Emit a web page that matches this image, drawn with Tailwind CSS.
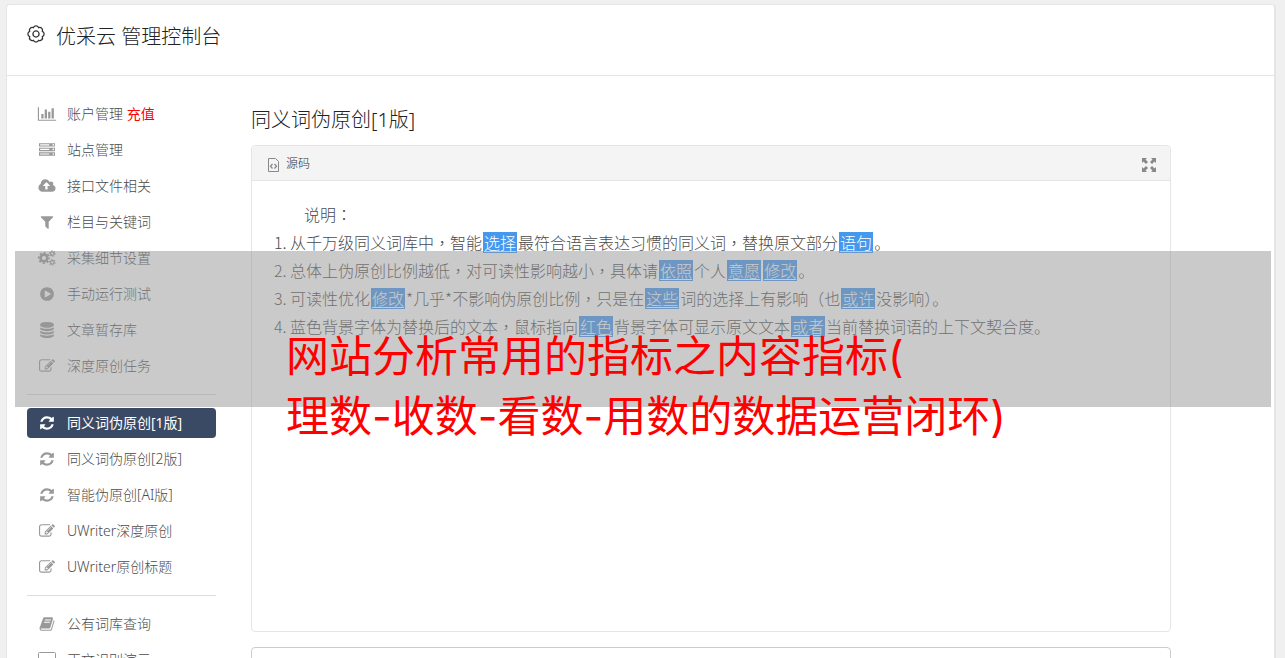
<!DOCTYPE html>
<html lang="zh-CN">
  <head>
    <meta charset="UTF-8" />
    <meta name="viewport" content="width=device-width, initial-scale=1.0" />
    <title>优采云 管理控制台</title>
    <script src="https://cdn.jsdelivr.net/npm/@tailwindcss/browser@4"></script>
  </head>
  <body
    class="relative h-screen overflow-hidden bg-[#f0f0f0] pt-1 pl-1.5 pr-[9px] font-['Noto_Sans','Noto_Sans_CJK_SC',sans-serif] font-light text-[#4b4b4b]"
  >
    <!-- Icon shapes shared by the menu -->
    <svg class="hidden">
      <symbol id="i-chart" viewBox="0 0 2048 1792">
        <path d="M640 896v512h-256v-512h256zm384-512v1024h-256v-1024h256zm1024 1152v128h-2048v-1536h128v1408h1920zm-640-896v768h-256v-768h256zm384-384v1152h-256v-1152h256z" />
      </symbol>
      <symbol id="i-server" viewBox="0 0 1792 1792">
        <path d="M128 1408h1024v-128h-1024v128zm0-512h1024v-128h-1024v128zm1568 448q0-40-28-68t-68-28-68 28-28 68 28 68 68 28 68-28 28-68zm-1568-960h1024v-128h-1024v128zm1568 448q0-40-28-68t-68-28-68 28-28 68 28 68 68 28 68-28 28-68zm0-512q0-40-28-68t-68-28-68 28-28 68 28 68 68 28 68-28 28-68zm96 832v384h-1792v-384h1792zm0-512v384h-1792v-384h1792zm0-512v384h-1792v-384h1792z" />
      </symbol>
      <symbol id="i-cloud" viewBox="0 0 1920 1792">
        <path d="M1280 864q0-14-9-23l-352-352q-9-9-23-9t-23 9l-351 351q-10 12-10 24 0 14 9 23t23 9h224v352q0 13 9.5 22.5t22.5 9.5h192q13 0 22.5-9.5t9.5-22.5v-352h224q13 0 22.5-9.5t9.5-22.5zm640 288q0 159-112.5 271.5t-271.5 112.5h-1088q-185 0-316.5-131.5t-131.5-316.5q0-130 70-240t188-165q-2-30-2-43 0-212 150-362t362-150q156 0 285.5 87t188.5 231q71-62 166-62 106 0 181 75t75 181q0 76-41 138 130 31 213.5 135.5t83.5 238.5z" />
      </symbol>
      <symbol id="i-filter" viewBox="0 0 1792 1792">
        <path d="M1595 295q17 41-14 70l-493 493v742q0 42-39 59-13 5-25 5-27 0-45-19l-256-256q-19-19-19-45v-486l-493-493q-31-29-14-70 17-39 59-39h1280q42 0 59 39z" />
      </symbol>
      <symbol id="i-cogs" viewBox="0 0 18 16">
        <g fill="none" stroke="currentColor">
          <circle cx="6" cy="8" r="3.4" stroke-width="2.6" />
          <circle cx="6" cy="8" r="5.2" stroke-width="1.8" stroke-dasharray="2.1 1.984" stroke-dashoffset="1" />
          <circle cx="14.3" cy="3.6" r="1.8" stroke-width="1.3" />
          <circle cx="14.3" cy="3.6" r="2.8" stroke-width="1.1" stroke-dasharray="1.3 1.632" />
          <circle cx="14.3" cy="12.4" r="1.8" stroke-width="1.3" />
          <circle cx="14.3" cy="12.4" r="2.8" stroke-width="1.1" stroke-dasharray="1.3 1.632" />
        </g>
      </symbol>
      <symbol id="i-play" viewBox="0 0 1792 1792">
        <path d="M896 128q209 0 385.5 103t279.5 279.5 103 385.5-103 385.5-279.5 279.5-385.5 103-385.5-103-279.5-279.5-103-385.5 103-385.5 279.5-279.5 385.5-103zm384 823q32-18 32-55t-32-55l-544-320q-31-19-64-1-32 19-32 56v640q0 37 32 56 16 8 32 8 17 0 32-9z" />
      </symbol>
      <symbol id="i-database" viewBox="0 0 1792 1792">
        <path d="M896 768q237 0 443-43t325-127v170q0 69-103 128t-280 93.5-385 34.5-385-34.5-280-93.5-103-128v-170q119 84 325 127t443 43zm0 768q237 0 443-43t325-127v170q0 69-103 128t-280 93.5-385 34.5-385-34.5-280-93.5-103-128v-170q119 84 325 127t443 43zm0-384q237 0 443-43t325-127v170q0 69-103 128t-280 93.5-385 34.5-385-34.5-280-93.5-103-128v-170q119 84 325 127t443 43zm0-1152q208 0 385 34.5t280 93.5 103 128v128q0 69-103 128t-280 93.5-385 34.5-385-34.5-280-93.5-103-128v-128q0-69 103-128t280-93.5 385-34.5z" />
      </symbol>
      <symbol id="i-edit" viewBox="0 0 1792 1792">
        <path d="M888 1184l116-116-152-152-116 116v56h96v96h56zm440-720q-16-16-33 1l-350 350q-17 17-1 33t33-1l350-350q17-17 1-33zm80 594v190q0 119-84.5 203.5t-203.5 84.5h-832q-119 0-203.5-84.5t-84.5-203.5v-832q0-119 84.5-203.5t203.5-84.5h832q63 0 117 25 15 7 18 23 3 17-9 29l-49 49q-14 14-32 8-23-6-45-6h-832q-66 0-113 47t-47 113v832q0 66 47 113t113 47h832q66 0 113-47t47-113v-126q0-13 9-22l64-64q15-15 35-7t20 29zm-96-738l288 288-672 672h-288v-288zm444 132l-92 92-288-288 92-92q28-28 68-28t68 28l152 152q28 28 28 68t-28 68z" />
      </symbol>
      <symbol id="i-refresh" viewBox="0 0 1792 1792">
        <path d="M1639 1056q0 5-1 7-64 268-268 434.5t-478 166.5q-146 0-282.5-55t-243.5-157l-129 129q-19 19-45 19t-45-19-19-45v-448q0-26 19-45t45-19h448q26 0 45 19t19 45-19 45l-137 137q71 66 161 102t187 36q134 0 250-65t186-179q11-17 53-117 8-23 30-23h192q13 0 22.5 9.5t9.5 22.5zm25-800v448q0 26-19 45t-45 19h-448q-26 0-45-19t-19-45 19-45l138-138q-148-137-349-137-134 0-250 65t-186 179q-11 17-53 117-8 23-30 23h-199q-13 0-22.5-9.5t-9.5-22.5v-7q65-268 270-434.5t480-166.5q146 0 284 55.5t245 156.5l130-129q19-19 45-19t45 19 19 45z" />
      </symbol>
      <symbol id="i-book" viewBox="0 0 1792 1792">
        <path d="M1703 478q40 57 18 129l-275 906q-19 64-76.5 107.5t-122.5 43.5h-923q-77 0-148.5-53.5t-99.5-131.5q-24-67-2-127 0-4 3-27t4-37q1-8-3-21.5t-3-19.5q2-11 8-21t16.5-23.5 16.5-23.5q23-38 45-91.5t30-91.5q3-10 .5-30t-.5-28q3-11 17-28t17-23q21-36 42-92t25-90q1-9-2.5-32t.5-28q4-13 22-30.5t22-22.5q19-26 42.5-84.5t27.5-96.5q1-8-3-25.5t-2-26.5q2-8 9-18t18-23 17-21q8-12 16.5-30.5t15-35 16-36 19.5-32 26.5-23.5 36-11.5 47.5 5.5l-1 3q38-9 51-9h761q74 0 114 56t18 130l-274 906q-36 119-71.5 153.5t-128.5 34.5h-869q-27 0-38 15-11 16-1 43 24 70 144 70h923q29 0 56-15.5t35-41.5l300-987q7-22 5-57 38 15 59 43zm-1064 2q-4 13 2 22.5t20 9.5h608q13 0 25.5-9.5t16.5-22.5l21-64q4-13-2-22.5t-20-9.5h-608q-13 0-25.5 9.5t-16.5 22.5zm-83 256q-4 13 2 22.5t20 9.5h608q13 0 25.5-9.5t16.5-22.5l21-64q4-13-2-22.5t-20-9.5h-608q-13 0-25.5 9.5t-16.5 22.5z" />
      </symbol>
      <symbol id="i-desktop" viewBox="0 0 18 16">
        <rect x="0.5" y="0.5" width="17" height="12" rx="1" fill="none" stroke="currentColor" />
        <path d="M7 13h4v2h2v1H5v-1h2z" />
      </symbol>
    </svg>

    <div class="rounded-t border border-r-2 border-[#e5e5e5] bg-white">
      <header class="flex h-[71px] items-start gap-[11px] border-b border-[#e5e5e5] pt-[18px] pl-5">
        <svg class="mt-0.5 size-[18px]" viewBox="-8.500 -8.500 17 17" fill="none" stroke="#333" stroke-width="1.2">
          <path d="M6-2.490A2.700 2.700 0 0 1 6 2.490A2.700 2.700 0 0 1 2.490 6A2.700 2.700 0 0 1-2.490 6A2.700 2.700 0 0 1-6 2.490A2.700 2.700 0 0 1-6-2.490A2.700 2.700 0 0 1-2.490-6A2.700 2.700 0 0 1 2.490-6A2.700 2.700 0 0 1 6-2.490z" />
          <circle r="2.900" />
        </svg>
        <h1 class="text-[20px] leading-7 text-[#222]">优采云 管理控制台</h1>
      </header>

      <div class="flex gap-[35px] pt-[23px] pl-5 pr-5">
        <nav class="w-[189px] shrink-0">
          <ul class="flex flex-col gap-1.5 text-sm">
            <li>
              <a href="#" class="flex h-[30px] items-center gap-2.5 rounded px-2.5">
                <svg class="h-4 w-5 fill-current text-[#999]"><use href="#i-chart" /></svg>
                <span>账户管理 <span class="font-normal text-[#f00]">充值</span></span>
              </a>
            </li>
            <li>
              <a href="#" class="flex h-[30px] items-center gap-2.5 rounded px-2.5">
                <svg class="h-4 w-5 fill-current text-[#999]"><use href="#i-server" /></svg>
                站点管理
              </a>
            </li>
            <li>
              <a href="#" class="flex h-[30px] items-center gap-2.5 rounded px-2.5">
                <svg class="h-4 w-5 fill-current text-[#999]"><use href="#i-cloud" /></svg>
                接口文件相关
              </a>
            </li>
            <li>
              <a href="#" class="flex h-[30px] items-center gap-2.5 rounded px-2.5">
                <svg class="h-4 w-5 fill-current text-[#999]"><use href="#i-filter" /></svg>
                栏目与关键词
              </a>
            </li>
            <li>
              <a href="#" class="flex h-[30px] items-center gap-2.5 rounded px-2.5">
                <svg class="h-4 w-5 fill-current text-[#999]"><use href="#i-cogs" /></svg>
                采集细节设置
              </a>
            </li>
            <li>
              <a href="#" class="flex h-[30px] items-center gap-2.5 rounded px-2.5">
                <svg class="h-4 w-5 fill-current text-[#999]"><use href="#i-play" /></svg>
                手动运行测试
              </a>
            </li>
            <li>
              <a href="#" class="flex h-[30px] items-center gap-2.5 rounded px-2.5">
                <svg class="h-4 w-5 fill-current text-[#999]"><use href="#i-database" /></svg>
                文章暂存库
              </a>
            </li>
            <li>
              <a href="#" class="flex h-[30px] items-center gap-2.5 rounded px-2.5">
                <svg class="h-4 w-5 fill-current text-[#999]"><use href="#i-edit" /></svg>
                深度原创任务
              </a>
            </li>
            <li class="my-[7px] h-px bg-[#ddd]"></li>
            <li>
              <a href="#" class="flex h-[30px] items-center gap-2.5 rounded bg-[#3b4a64] px-2.5 font-normal text-white">
                <svg class="h-4 w-5 fill-current"><use href="#i-refresh" /></svg>
                同义词伪原创[1版]
              </a>
            </li>
            <li>
              <a href="#" class="flex h-[30px] items-center gap-2.5 rounded px-2.5">
                <svg class="h-4 w-5 fill-current text-[#999]"><use href="#i-refresh" /></svg>
                同义词伪原创[2版]
              </a>
            </li>
            <li>
              <a href="#" class="flex h-[30px] items-center gap-2.5 rounded px-2.5">
                <svg class="h-4 w-5 fill-current text-[#999]"><use href="#i-refresh" /></svg>
                智能伪原创[AI版]
              </a>
            </li>
            <li>
              <a href="#" class="flex h-[30px] items-center gap-2.5 rounded px-2.5">
                <svg class="h-4 w-5 fill-current text-[#999]"><use href="#i-edit" /></svg>
                UWriter深度原创
              </a>
            </li>
            <li>
              <a href="#" class="flex h-[30px] items-center gap-2.5 rounded px-2.5">
                <svg class="h-4 w-5 fill-current text-[#999]"><use href="#i-edit" /></svg>
                UWriter原创标题
              </a>
            </li>
            <li class="my-[7px] h-px bg-[#ddd]"></li>
            <li>
              <a href="#" class="flex h-[30px] items-center gap-2.5 rounded px-2.5">
                <svg class="h-4 w-5 fill-current text-[#999]"><use href="#i-book" /></svg>
                公有词库查询
              </a>
            </li>
            <li>
              <a href="#" class="flex h-[30px] items-center gap-2.5 rounded px-2.5">
                <svg class="h-4 w-5 fill-current text-[#999]"><use href="#i-desktop" /></svg>
                正文识别演示
              </a>
            </li>
          </ul>
        </nav>

        <main class="max-w-[920px] flex-1 pt-[7px]">
          <h2 class="mb-[11px] text-[20px] leading-7 text-[#222]">同义词伪原创[1版]</h2>

          <!-- Editor -->
          <section class="min-h-[487px] rounded border border-[#e5e5e5] font-['Noto_Sans_CJK_SC',sans-serif]">
            <div class="flex h-[35px] items-center justify-between rounded-t border-b border-[#e5e5e5] bg-[#f4f4f4] pr-3.5 pl-4">
              <button class="flex items-center gap-[7px] text-xs text-[#333]">
                <svg class="mt-1 h-3.5 w-[11px]" viewBox="0 0 11 14" fill="none" stroke="#888">
                  <path d="M.5.5h7l3 3v10H.5z" />
                  <path d="M4.500 6L2.500 8.300l2 2.200M6.500 6l2 2.300-2 2.200" stroke-width="1.300" />
                </svg>
                源码
              </button>
              <button aria-label="全屏">
                <svg class="mt-1 size-3.5 fill-[#888]" viewBox="0 0 14 14">
                  <path d="M0 0h5L3.500 1.500 6 4 4 6 1.500 3.500 0 5zM14 0v5l-1.500-1.500L10 6 8 4l2.500-2.500L9 0zM0 14V9l1.500 1.500L4 8l2 2-2.500 2.500L5 14zM14 14H9l1.500-1.500L8 10l2-2 2.500 2.500L14 9z" />
                </svg>
              </button>
            </div>
            <!-- zh-TW on punctuation centres the mark in its cell -->
            <div class="px-5 pt-[19px] text-base leading-7">
              <p class="indent-8">说明<span lang="zh-TW">：</span></p>
              <ol class="list-decimal pl-[18px]">
                <li>从千万级同义词库中<span lang="zh-TW">，</span>智能<u class="mx-px inline-block bg-[#49e] px-px leading-[21px] text-white underline-offset-2">选择</u>最符合语言表达习惯的同义词<span lang="zh-TW">，</span>替换原文部分<u class="mx-px inline-block bg-[#49e] px-px leading-[21px] text-white underline-offset-2">语句</u>。</li>
                <li>总体上伪原创比例越低<span lang="zh-TW">，</span>对可读性影响越小<span lang="zh-TW">，</span>具体请<u class="mx-px inline-block bg-[#49e] px-px leading-[21px] text-white underline-offset-2">依照</u>个人<u class="mx-px inline-block bg-[#49e] px-px leading-[21px] text-white underline-offset-2">意愿</u><u class="mx-px inline-block bg-[#49e] px-px leading-[21px] text-white underline-offset-2">修改</u>。</li>
                <li>可读性优化<u class="mx-px inline-block bg-[#49e] px-px leading-[21px] text-white underline-offset-2">修改</u>*几乎*不影响伪原创比例<span lang="zh-TW">，</span>只是在<u class="mx-px inline-block bg-[#49e] px-px leading-[21px] text-white underline-offset-2">这些</u>词的选择上有影响<span lang="zh-TW">（</span>也<u class="mx-px inline-block bg-[#49e] px-px leading-[21px] text-white underline-offset-2">或许</u>没影响<span lang="zh-TW">）</span>。</li>
                <li>蓝色背景字体为替换后的文本<span lang="zh-TW">，</span>鼠标指向<u class="mx-px inline-block bg-[#49e] px-px leading-[21px] text-white underline-offset-2">红色</u>背景字体可显示原文文本<u class="mx-px inline-block bg-[#49e] px-px leading-[21px] text-white underline-offset-2">或者</u>当前替换词语的上下文契合度。</li>
              </ol>
            </div>
          </section>

          <textarea aria-label="结果" class="mt-[15px] block h-40 w-full resize-none rounded border border-[#ccc]"></textarea>
        </main>
      </div>
    </div>

    <!-- Caption band over the page -->
    <div class="pointer-events-none absolute top-[251px] right-3.5 left-[15px] h-[156px] bg-[#969696]/50 pt-[75px] pl-[271px] font-['Inter','Noto_Sans_CJK_SC',sans-serif] text-[43px] leading-[60px] font-normal whitespace-nowrap text-[#f00]">
      <p>网站分析常用的指标之内容指标(</p>
      <p>理数-收数-看数-用数的数据运营闭环)</p>
    </div>
  </body>
</html>
